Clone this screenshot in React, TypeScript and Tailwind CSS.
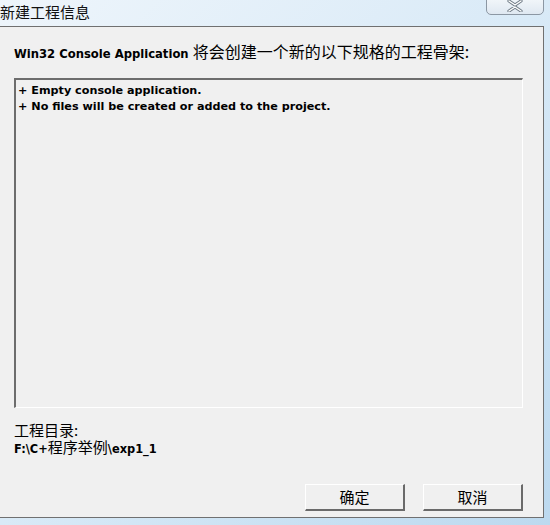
const cjk = "font-['Noto_Sans_CJK_SC',sans-serif]";
const latin = "font-['DejaVu_Sans','Noto_Sans_CJK_SC',sans-serif]";

function CloseButton() {
  return (
    <div className="mt-[-4px] flex h-[19px] w-[58px] items-center justify-center rounded-b-[5px] border border-[#8c97a3] bg-gradient-to-b from-[#f4f8fb] to-[#dfe8f1]">
      <svg width="18" height="12" viewBox="0 0 18 12">
        <path
          d="M3 1 L9 5 L15 1 M3 11 L9 7 L15 11"
          fill="none"
          stroke="#6f7b86"
          strokeWidth="3.2"
          strokeLinecap="round"
        />
        <path
          d="M3 1 L9 5 L15 1 M3 11 L9 7 L15 11"
          fill="none"
          stroke="#ffffff"
          strokeWidth="1.4"
          strokeLinecap="round"
        />
      </svg>
    </div>
  );
}

function Btn({ label }: { label: string }) {
  return (
    <button
      className={`flex h-[27px] w-[100px] items-center justify-center border-t border-l border-t-white border-l-white border-r-2 border-b-2 border-r-[#6a6a6a] border-b-[#6a6a6a] bg-[#f0f0f0] text-[15px] text-black ${cjk}`}
    >
      {label}
    </button>
  );
}

export default function App() {
  return (
    <div className="flex h-[525px] w-[550px] flex-col overflow-hidden bg-gradient-to-br from-[#eef5fb] via-[#d9eaf7] to-[#bcd9ef]">
      <div className="flex h-[26px] items-start justify-between pr-[6px]">
        <div className={`pt-[1px] text-[15px] leading-[22px] text-[#111] ${cjk}`}>新建工程信息</div>
        <CloseButton />
      </div>

      <div className="flex h-[492px] w-[544px] flex-col border-t border-r border-b border-[#707070] bg-[#f0f0f0] px-[14px]">
        <div className="pt-[14px] text-[16px] leading-[20px] text-black">
          <span className={`text-[11.6px] font-bold ${latin}`}>Win32 Console Application </span>
          <span className={cjk}>将会创建一个新的以下规格的工程骨架:</span>
        </div>

        <div className="mt-[14px] h-[330px] w-[509px] border-t-2 border-l-2 border-t-[#6d6d6d] border-l-[#6d6d6d] border-r border-b border-r-white border-b-white bg-[#f0f0f0] px-[2px] pt-[3px]">
          <div className={`text-[11.2px] font-bold leading-[16px] text-black ${latin}`}>+ Empty console application.</div>
          <div className={`text-[11.2px] font-bold leading-[16px] text-black ${latin}`}>
            + No files will be created or added to the project.
          </div>
        </div>

        <div className="mt-[13px] text-black">
          <div className={`text-[15px] leading-[17px] ${cjk}`}>工程目录:</div>
          <div className="text-[15px] leading-[17px]">
            <span className={`text-[11.4px] font-bold ${latin}`}>F:\C+</span>
            <span className={cjk}>程序举例</span>
            <span className={`text-[11.4px] font-bold ${latin}`}>\exp1_1</span>
          </div>
        </div>

        <div className="mt-auto mb-[6px] flex justify-end gap-[18px] pr-[6px]">
          <Btn label="确定" />
          <Btn label="取消" />
        </div>
      </div>
    </div>
  );
}
